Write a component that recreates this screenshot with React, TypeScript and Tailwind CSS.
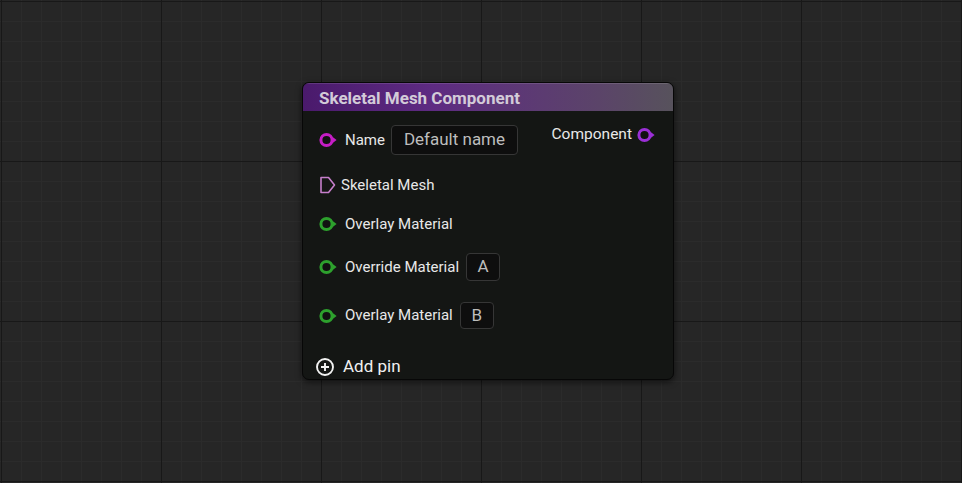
import React from "react";

const font = { fontFamily: "Roboto, 'Noto Sans', sans-serif" };

// round exec/data pin with a little arrow on its right side
function DataPin({ color }: { color: string }) {
  return (
    <svg width="19" height="16" viewBox="0 0 19 16" className="shrink-0">
      <circle cx="7.5" cy="8" r="5.6" fill="#111" stroke={color} strokeWidth="3" />
      <path d="M14 5.2 L17.6 8 L14 10.8 Z" fill={color} />
    </svg>
  );
}

function MeshPin() {
  return (
    <svg width="17" height="18" viewBox="0 0 17 18" className="shrink-0">
      <path
        d="M2 1.5 H9.5 L15.5 9 L9.5 16.5 H2 Z"
        fill="none"
        stroke="#c67fcb"
        strokeWidth="1.6"
        strokeLinejoin="round"
      />
    </svg>
  );
}

function AddIcon() {
  return (
    <svg width="20" height="20" viewBox="0 0 20 20" className="shrink-0">
      <circle cx="10" cy="10" r="8" fill="none" stroke="#f2f2f2" strokeWidth="1.9" />
      <path d="M10 6 V14 M6 10 H14" stroke="#f2f2f2" strokeWidth="1.9" />
    </svg>
  );
}

function ValueBox({ label, className }: { label: string; className: string }) {
  return (
    <div
      className={`flex items-center justify-center rounded-[4px] border border-[#363636] bg-[#0e0e0e] text-[17px] text-[#bdbdbd] ${className}`}
    >
      {label}
    </div>
  );
}

export default function App() {
  return (
    <div
      className="relative h-[483px] w-[962px] overflow-hidden bg-[#262626] bg-[linear-gradient(to_right,#181818_1px,transparent_1px),linear-gradient(to_bottom,#181818_1px,transparent_1px),linear-gradient(to_right,#2b2b2b_1px,transparent_1px),linear-gradient(to_bottom,#2b2b2b_1px,transparent_1px)] bg-size-[160px_160px,160px_160px,20px_20px,20px_20px] bg-position-[1px_1px,1px_1px,1px_1px,1px_1px]"
      style={font}
    >
      <div className="absolute left-[302px] top-[82px] flex h-[298px] w-[372px] flex-col overflow-hidden rounded-[7px] border border-[#070707] bg-[#141614] shadow-[0_2px_6px_rgba(0,0,0,0.6)]">
        <div className="flex h-[28px] shrink-0 items-center bg-[linear-gradient(to_right,#4a1a6c,#5e2b82_35%,#5b4469_80%,#57525c)] pl-[16px] pt-[3px] shadow-[inset_0_1px_0_rgba(255,255,255,0.12)]">
          <span className="text-[17px] font-bold text-[#d3cbd8]">Skeletal Mesh Component</span>
        </div>

        <div className="relative flex flex-1 flex-col pl-[16px] text-[15px] text-[#e8e8e8]">
          <div className="absolute right-[17px] top-[12px] flex items-center gap-[5px]">
            <span className="text-[15.5px]">Component</span>
            <DataPin color="#9b2fd6" />
          </div>

          <div className="mt-[14px] flex h-[30px] items-center">
            <DataPin color="#c51dc5" />
            <span className="ml-[7px]">Name</span>
            <ValueBox label="Default name" className="ml-[6px] h-[30px] w-[127px]" />
          </div>

          <div className="mt-[20px] flex h-[20px] items-center">
            <MeshPin />
            <span className="ml-[5px]">Skeletal Mesh</span>
          </div>

          <div className="mt-[19px] flex h-[20px] items-center">
            <DataPin color="#2da02d" />
            <span className="ml-[7px]">Overlay Material</span>
          </div>

          <div className="mt-[19px] flex h-[28px] items-center">
            <DataPin color="#2da02d" />
            <span className="ml-[7px]">Override Material</span>
            <ValueBox label="A" className="ml-[7px] h-[28px] w-[34px]" />
          </div>

          <div className="mt-[21px] flex h-[27px] items-center">
            <DataPin color="#2da02d" />
            <span className="ml-[7px]">Overlay Material</span>
            <ValueBox label="B" className="ml-[7px] h-[27px] w-[34px]" />
          </div>

          <div className="mt-[28px] flex h-[20px] items-center -ml-[4px]">
            <AddIcon />
            <span className="ml-[8px] text-[17px] text-[#f0f0f0]">Add pin</span>
          </div>
        </div>
      </div>
    </div>
  );
}
